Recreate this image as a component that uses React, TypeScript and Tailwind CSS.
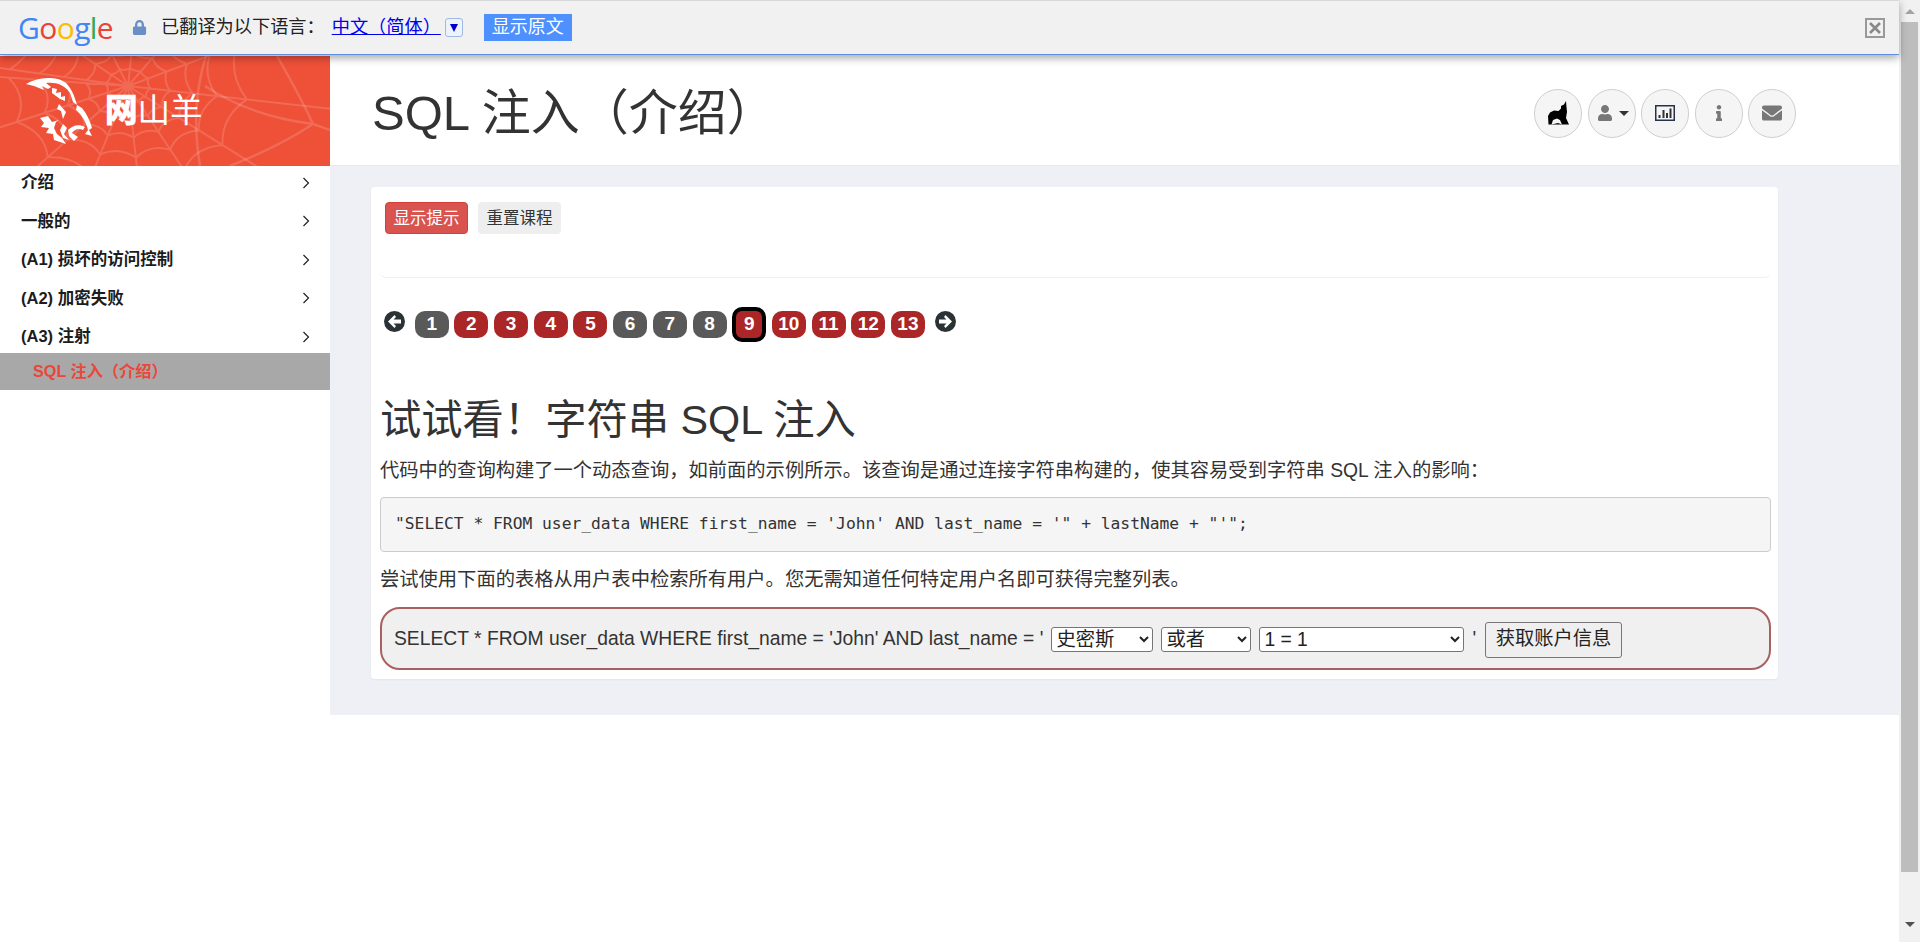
import { FaLock, FaUser, FaInfo, FaEnvelope } from "react-icons/fa";

const nav = ["介绍", "一般的", "(A1) 损坏的访问控制", "(A2) 加密失败"];
const pages = [
  { n: 1, done: false }, { n: 2, done: true }, { n: 3, done: true }, { n: 4, done: true }, { n: 5, done: true },
  { n: 6, done: false }, { n: 7, done: false }, { n: 8, done: false }, { n: 9, done: true, cur: true },
  { n: 10, done: true }, { n: 11, done: true }, { n: 12, done: true }, { n: 13, done: true },
];

function Chevron() {
  return (
    <svg width="8" height="12" viewBox="0 0 8 12" fill="none" stroke="#222" strokeWidth="1.2">
      <path d="M1.5 1 L6.5 6 L1.5 11" />
    </svg>
  );
}

function NavRow({ label }: { label: string }) {
  return (
    <div className="flex h-[31px] items-center justify-between pl-[21px] pr-[20px] text-[16.5px] font-bold text-[#1c1c1c]">
      <span>{label}</span>
      <Chevron />
    </div>
  );
}

function webPaths() {
  const cx = 128;
  const cy = 30;
  const angles = [-170, -140, -112, -85, -55, -25, 8, 38, 62, 85, 108, 132, 158, 185];
  const radii = [18, 34, 52, 72, 96];
  const pt = (a: number, r: number) => {
    const t = (a * Math.PI) / 180;
    return [cx + r * Math.cos(t) * 1.25, cy + r * Math.sin(t)];
  };
  let d = "";
  angles.forEach((a) => {
    const [x, y] = pt(a, 260);
    d += `M${cx} ${cy} L${x.toFixed(1)} ${y.toFixed(1)} `;
  });
  radii.forEach((r) => {
    for (let i = 0; i < angles.length - 1; i++) {
      const [x1, y1] = pt(angles[i], r);
      const [x2, y2] = pt(angles[i + 1], r);
      const [mx, my] = pt((angles[i] + angles[i + 1]) / 2, r * 0.84);
      d += `M${x1.toFixed(1)} ${y1.toFixed(1)} Q${mx.toFixed(1)} ${my.toFixed(1)} ${x2.toFixed(1)} ${y2.toFixed(1)} `;
    }
  });
  return d;
}

function Web() {
  return (
    <svg className="absolute inset-0" width="330" height="110" viewBox="0 0 330 110" fill="none" stroke="#fff" strokeOpacity="0.15" strokeWidth="2">
      <path d={webPaths()} />
      <path d="M277 0 Q300 40 313 68 L330 74 M313 68 Q280 90 230 110 M313 68 Q250 60 205 30" strokeWidth="2.5" />
      <path d="M206 0 Q190 50 200 110" strokeWidth="2.5" />
    </svg>
  );
}

function Goat() {
  return (
    <svg className="relative shrink-0" width="66" height="66" viewBox="0 0 66 66" fill="#fff">
      {/* horn with teeth */}
      <path d="M0 6 C12 -1 32 -3 41 6 C47 13 49 20 51 27 L47 24 L44 15 C39 7 30 4 20 5 L25 9 L22 11 L16 8 L18 12 L13 10 L8 8Z" />
      <path d="M26 10 L31 11 L30 15 L35 14 L35 19 L39 18 L39 23 L34 21 L30 18 L26 15Z" />
      {/* face line */}
      <path d="M51 27 L56 30 C61 36 64 43 66 50 L63 52 L66 58 L59 56 L62 52 C60 44 56 37 50 32Z" />
      {/* jaw */}
      <path d="M42 52 C47 47 53 46 59 49 L57 52 C53 50 49 51 46 55 L52 59 L48 63 L43 58Z" />
      {/* mane */}
      <path d="M33 26 L40 34 L37 41 L35 33 L31 31Z" />
      <path d="M22 38 L14 40 L18 45 L15 49 L23 50 L20 55 L27 56 L28 62 L40 66 L36 60 L31 56 L28 50 L30 44 L33 42 L26 44Z" />
      <path d="M37 46 L41 50 L38 56 L43 62 L37 60 L34 52Z" />
    </svg>
  );
}

function Wolf() {
  return (
    <svg width="21" height="24" viewBox="0 0 21 24" fill="#000">
      <path d="M18 0 L18.5 6 L19 11 L18 17 L21 23.5 L0.5 23.5 L0 15 L2 11.5 L6 9.5 L10.5 10 L13 7.5 L13 5 L16 3.5Z" />
      <path d="M3.5 23.5 L5 19 L9 17.5 L12 19 L14 23.5 L10 22 Z" fill="#f5f5f5" />
    </svg>
  );
}

function ChartIcon() {
  return (
    <svg width="20" height="16" viewBox="0 0 20 16" fill="none">
      <rect x="0.75" y="0.75" width="18.5" height="14.5" stroke="#26324a" strokeWidth="1.5" />
      <rect x="3.5" y="10" width="2" height="3" fill="#333" />
      <rect x="7.5" y="5" width="2" height="8" fill="#333" />
      <rect x="11" y="8" width="2" height="5" fill="#333" />
      <rect x="14.5" y="3.5" width="2" height="9.5" fill="#333" />
    </svg>
  );
}

function Arrow({ right }: { right?: boolean }) {
  return (
    <svg width="21" height="21" viewBox="0 0 21 21" className={`shrink-0 ${right ? "mb-[6px] ml-[4px]" : "mb-[6px] mr-[4px]"}`}>
      <circle cx="10.5" cy="10.5" r="10.5" fill="#2b3236" />
      <path d={right ? "M10.5 4 L17 10.5 L10.5 17 L9 15 L11.5 12.5 L4 12.5 L4 8.5 L11.5 8.5 L9 6Z" : "M10.5 4 L4 10.5 L10.5 17 L12 15 L9.5 12.5 L17 12.5 L17 8.5 L9.5 8.5 L12 6Z"} fill="#fff" />
    </svg>
  );
}

function Circle({ children, gap }: { children: React.ReactNode; gap?: boolean }) {
  return (
    <div className={`flex h-[49px] w-[48px] shrink-0 items-center justify-center rounded-full border border-[#cfcfcf] bg-[#f5f5f5] text-[#777] ${gap ? "gap-[6px] pl-[3px]" : ""}`}>
      {children}
    </div>
  );
}

const selectCls = "ml-[8px] h-[25px] rounded-[3px] border border-[#767676] bg-white text-[19.3px] text-[#222]";

export default function App() {
  return (
    <div className="flex h-[942px] w-full overflow-hidden bg-white text-[#333] [font-family:'Liberation_Sans','Noto_Sans_CJK_SC',sans-serif]">
      <div className="flex min-w-0 flex-1 flex-col">
        {/* translate bar */}
        <div className="relative z-10 flex h-[55px] shrink-0 items-center border-t border-b border-t-[#d8d8d8] border-b-[#5f8fe0] bg-[#f1f1f1] pl-[18px] pr-[14px] shadow-[0_3px_8px_rgba(0,0,0,0.35)]">
          <div className="w-[114px] text-[30px] font-medium leading-none tracking-[-0.6px] [font-family:'Open_Sans',sans-serif]">
            <span className="text-[#4285f4]">G</span>
            <span className="text-[#ea4335]">o</span>
            <span className="text-[#fbbc05]">o</span>
            <span className="text-[#4285f4]">g</span>
            <span className="text-[#34a853]">l</span>
            <span className="text-[#ea4335]">e</span>
          </div>
          <FaLock className="text-[#6a8fc5]" size={15} />
          <span className="ml-[14px] text-[18.2px] text-[#222]">已翻译为以下语言：</span>
          <span className="ml-[7px] text-[18.2px] text-[#0000ee] underline">中文（简体）</span>
          <div className="ml-[4px] flex h-[19px] w-[18px] items-center justify-center rounded-[3px] border border-[#9db9e4] bg-[#eef3fb]">
            <div className="h-0 w-0 border-x-[4px] border-t-[8px] border-x-transparent border-t-[#0000cc]" />
          </div>
          <div className="ml-[21px] flex h-[27px] w-[88px] items-center justify-center bg-[#4d90fe] text-[18px] text-white">显示原文</div>
          <div className="ml-auto flex h-[20px] w-[20px] items-center justify-center border-2 border-[#999]">
            <svg width="12" height="12" viewBox="0 0 12 12" stroke="#888" strokeWidth="2.6"><path d="M1 1 L11 11 M11 1 L1 11" /></svg>
          </div>
        </div>

        <div className="mt-px flex min-h-0 flex-1">
          {/* sidebar */}
          <aside className="w-[330px] shrink-0">
            <div className="relative flex h-[110px] items-center overflow-hidden bg-[#ef5038] pl-[26px]">
              <Web />
              <Goat />
              <span className="relative ml-[13px] text-[32.5px] leading-none text-white">
                <b className="[-webkit-text-stroke:1px_white]">网</b>山羊
              </span>
            </div>
            <div className="flex flex-col gap-[7.5px] pt-px">
              {nav.map((n) => <NavRow key={n} label={n} />)}
              <div className="flex flex-col gap-[0.5px]">
                <NavRow label="(A3) 注射" />
                <div className="flex h-[37px] items-center bg-[#a8a8a8] pl-[33px] text-[16.2px] font-bold text-[#e8473a]">SQL 注入（介绍）</div>
              </div>
            </div>
          </aside>

          {/* main */}
          <main className="min-w-0 flex-1">
            <header className="flex h-[110px] items-center justify-between border-b border-[#e8e9f0] bg-white pl-[42px] pr-[103px] pt-[5px]">
              <h1 className="text-[49px] font-normal leading-none text-[#333]">SQL 注入（介绍）</h1>
              <div className="flex items-center gap-[5.5px]">
                <Circle><Wolf /></Circle>
                <Circle gap>
                  <FaUser size={16} />
                  <div className="h-0 w-0 border-x-[5.5px] border-t-[5.5px] border-x-transparent border-t-[#333]" />
                </Circle>
                <Circle><ChartIcon /></Circle>
                <Circle><FaInfo size={16} /></Circle>
                <Circle><FaEnvelope size={20} /></Circle>
              </div>
            </header>
            <div className="h-[549px] bg-[#eff0f5] pl-[41px] pr-[121px] pt-[21px]">
              <div className="h-[492px] rounded-[4px] bg-white pl-[9px] pr-[7px] shadow-[0_1px_2px_rgba(0,0,0,0.05)]">
                <div className="h-[91px] rounded-b-[6px] border-b border-[#f0f0f0] pt-[15px]">
                  <div className="ml-[5px] flex gap-[10px]">
                    <button className="flex h-[32px] w-[83px] items-center justify-center rounded-[4px] border border-[#d43f3a] bg-[#d9534f] text-[16.5px] text-white">显示提示</button>
                    <button className="flex h-[32px] w-[83px] items-center justify-center rounded-[4px] border border-[#eee] bg-[#eee] text-[16.5px] text-[#333]">重置课程</button>
                  </div>
                </div>
                <div className="mt-[29px] flex h-[35px] items-center gap-[5.7px] pl-[4px]">
                  <Arrow />
                  {pages.map((p) => (
                    <div
                      key={p.n}
                      className={`flex w-[34px] shrink-0 items-center justify-center rounded-[10px] text-[19px] font-bold text-white ${p.done ? "bg-[#ab2626]" : "bg-[#595959]"} ${p.cur ? "h-[35px] border-4 border-black" : "h-[27px]"}`}
                    >
                      {p.n}
                    </div>
                  ))}
                  <Arrow right />
                </div>
                <h2 className="mt-[53px] text-[41.3px] font-normal leading-[50px] text-[#333]">试试看！字符串 SQL 注入</h2>
                <p className="mt-[12px] text-[19.3px] leading-[28px]">代码中的查询构建了一个动态查询，如前面的示例所示。该查询是通过连接字符串构建的，使其容易受到字符串 SQL 注入的影响：</p>
                <pre className="mt-[12px] flex h-[55px] items-center rounded-[4px] border border-[#ccc] bg-[#f5f5f5] pl-[14px] text-[16.3px] text-[#333] [font-family:'DejaVu_Sans_Mono',monospace]">{`"SELECT * FROM user_data WHERE first_name = 'John' AND last_name = '" + lastName + "'";`}</pre>
                <p className="mt-[14px] text-[19.3px] leading-[28px]">尝试使用下面的表格从用户表中检索所有用户。您无需知道任何特定用户名即可获得完整列表。</p>
                <div className="mt-[13px] flex h-[63px] items-center rounded-[20px] border-2 border-[#a86060] bg-[#f0f0f0] pl-[12px] pt-[2px] text-[19.3px]">
                  <span className="whitespace-pre">SELECT * FROM user_data WHERE first_name = 'John' AND last_name = '</span>
                  <select defaultValue="s" className={`${selectCls} w-[102px]`}>
                    <option value="s">史密斯</option>
                  </select>
                  <select defaultValue="o" className={`${selectCls} w-[90px]`}>
                    <option value="o">或者</option>
                  </select>
                  <select defaultValue="1" className={`${selectCls} w-[205px]`}>
                    <option value="1">1 = 1</option>
                  </select>
                  <span className="ml-[8px]">'</span>
                  <button className="ml-[9px] h-[36px] w-[137px] rounded-[3px] border border-[#767676] bg-[#efefef] text-[19.3px] text-[#222]">获取账户信息</button>
                </div>
              </div>
            </div>
          </main>
        </div>
      </div>

      {/* scrollbar */}
      <div className="flex w-[21px] shrink-0 flex-col items-center bg-[#f1f1f1]">
        <div className="mt-[9px] h-0 w-0 border-x-[5px] border-b-[5px] border-x-transparent border-b-[#a3a3a3]" />
        <div className="mt-[8px] h-[850px] w-[17px] bg-[#bdbdbd]" />
        <div className="mt-[50px] h-0 w-0 border-x-[5px] border-t-[5px] border-x-transparent border-t-[#505050]" />
      </div>
    </div>
  );
}
